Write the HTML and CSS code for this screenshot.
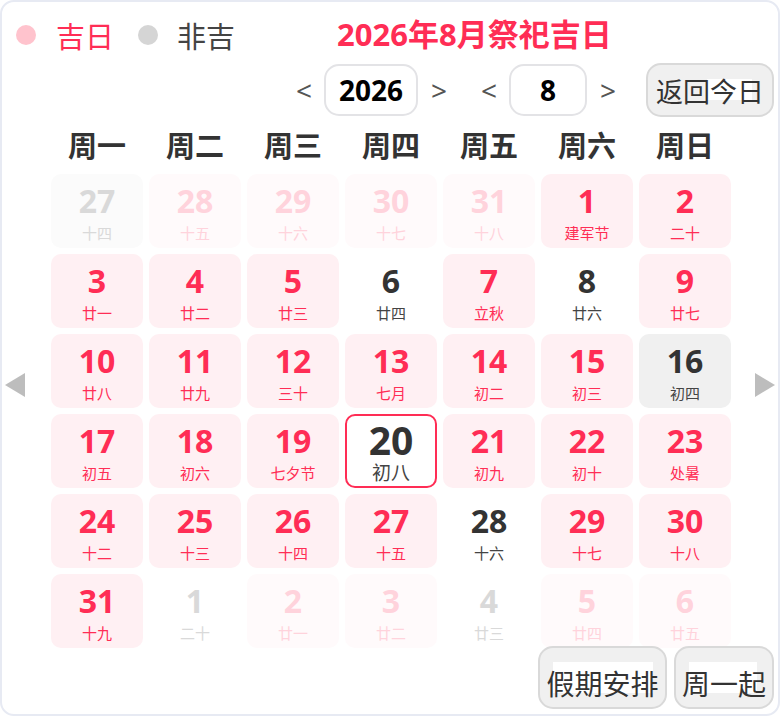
FILE: index.html
```html
<!DOCTYPE html>
<html lang="zh">
<head>
<meta charset="utf-8">
<link rel="stylesheet" href="styles.css">
</head>
<body>
<div class="cal">
  <div class="top">
    <span class="dot dot-ji"></span><span class="leg leg-ji">吉日</span>
    <span class="dot dot-no"></span><span class="leg leg-no">非吉</span>
    <span class="title">2026年8月祭祀吉日</span>
  </div>
  <div class="nav">
    <span class="arr arr-a">&lt;</span>
    <span class="box box-year">2026</span>
    <span class="arr arr-b">&gt;</span>
    <span class="arr arr-c">&lt;</span>
    <span class="box box-month">8</span>
    <span class="arr arr-d">&gt;</span>
    <span class="btn btn-today">返回今日</span>
  </div>
  <div class="main">
    <div class="side side-l"><span class="tri tri-l"></span></div>
    <div class="body">
      <div class="weeks">
        <span>周一</span><span>周二</span><span>周三</span><span>周四</span><span>周五</span><span>周六</span><span>周日</span>
      </div>
      <div class="grid">
        <div class="cell og bgg"><b>27</b><i>十四</i></div>
        <div class="cell op"><b>28</b><i>十五</i></div>
        <div class="cell op"><b>29</b><i>十六</i></div>
        <div class="cell op"><b>30</b><i>十七</i></div>
        <div class="cell op"><b>31</b><i>十八</i></div>
        <div class="cell ji"><b>1</b><i>建军节</i></div>
        <div class="cell ji"><b>2</b><i>二十</i></div>

        <div class="cell ji"><b>3</b><i>廿一</i></div>
        <div class="cell ji"><b>4</b><i>廿二</i></div>
        <div class="cell ji"><b>5</b><i>廿三</i></div>
        <div class="cell no"><b>6</b><i>廿四</i></div>
        <div class="cell ji"><b>7</b><i>立秋</i></div>
        <div class="cell no"><b>8</b><i>廿六</i></div>
        <div class="cell ji"><b>9</b><i>廿七</i></div>

        <div class="cell ji"><b>10</b><i>廿八</i></div>
        <div class="cell ji"><b>11</b><i>廿九</i></div>
        <div class="cell ji"><b>12</b><i>三十</i></div>
        <div class="cell ji"><b>13</b><i>七月</i></div>
        <div class="cell ji"><b>14</b><i>初二</i></div>
        <div class="cell ji"><b>15</b><i>初三</i></div>
        <div class="cell today"><b>16</b><i>初四</i></div>

        <div class="cell ji"><b>17</b><i>初五</i></div>
        <div class="cell ji"><b>18</b><i>初六</i></div>
        <div class="cell ji"><b>19</b><i>七夕节</i></div>
        <div class="cell sel"><b>20</b><i>初八</i></div>
        <div class="cell ji"><b>21</b><i>初九</i></div>
        <div class="cell ji"><b>22</b><i>初十</i></div>
        <div class="cell ji"><b>23</b><i>处暑</i></div>

        <div class="cell ji"><b>24</b><i>十二</i></div>
        <div class="cell ji"><b>25</b><i>十三</i></div>
        <div class="cell ji"><b>26</b><i>十四</i></div>
        <div class="cell ji"><b>27</b><i>十五</i></div>
        <div class="cell no"><b>28</b><i>十六</i></div>
        <div class="cell ji"><b>29</b><i>十七</i></div>
        <div class="cell ji"><b>30</b><i>十八</i></div>

        <div class="cell ji"><b>31</b><i>十九</i></div>
        <div class="cell og"><b>1</b><i>二十</i></div>
        <div class="cell op"><b>2</b><i>廿一</i></div>
        <div class="cell op"><b>3</b><i>廿二</i></div>
        <div class="cell og"><b>4</b><i>廿三</i></div>
        <div class="cell op"><b>5</b><i>廿四</i></div>
        <div class="cell op"><b>6</b><i>廿五</i></div>
      </div>
    </div>
    <div class="side side-r"><span class="tri tri-r"></span></div>
  </div>
  <div class="foot">
    <span class="btn btn-hol">假期安排</span>
    <span class="btn btn-mon">周一起</span>
  </div>
</div>
</body>
</html>
```

FILE: styles.css
```css
html, body {
  margin: 0;
  padding: 0;
  background: #ffffff;
}
body {
  font-family: "Noto Sans", "Noto Sans CJK SC", sans-serif;
  color: #333;
}
.cal {
  width: 780px;
  height: 716px;
  box-sizing: border-box;
  border: 2px solid #e7eaf3;
  border-radius: 14px;
  overflow: hidden;
}
.top {
  display: flex;
  align-items: center;
  height: 46px;
  margin-top: 9px;
}
.dot {
  display: inline-block;
  width: 20px;
  height: 20px;
  border-radius: 50%;
  margin-top: 2px;
}
.dot-ji { background: #ffc3cd; margin-left: 14px; }
.dot-no { background: #d5d5d5; margin-left: 24px; }
.leg {
  font-family: "Noto Sans CJK SC", sans-serif;
  font-size: 29px;
  line-height: 46px;
  margin-top: 2px;
}
.leg-ji { color: #ff2d55; margin-left: 20px; }
.leg-no { color: #444; margin-left: 19px; }
.title {
  margin-left: 102px;
  font-family: "Noto Sans", "Noto Sans CJK SC", sans-serif;
  font-weight: 700;
  font-size: 31px;
  color: #ff2d55;
  line-height: 46px;
}
.nav {
  display: flex;
  align-items: center;
  justify-content: flex-end;
  height: 54px;
  margin-top: 6px;
  padding-right: 4px;
}
.arr {
  width: 28px;
  text-align: center;
  font-size: 28px;
  color: #555;
  line-height: 54px;
}
.arr-a { margin-right: 6px; }
.arr-b { margin: 0 22px 0 7px; }
.arr-c { margin-right: 6px; }
.arr-d { margin: 0 24px 0 7px; }
.box {
  box-sizing: border-box;
  height: 52px;
  border: 2px solid #e3e3e6;
  border-radius: 15px;
  display: flex;
  align-items: center;
  justify-content: center;
  font-weight: 700;
  font-size: 28px;
  color: #000;
}
.box-year { width: 94px; }
.box-month { width: 78px; }
.btn {
  box-sizing: border-box;
  display: flex;
  align-items: center;
  justify-content: center;
  border: 2px solid #d9d9d9;
  border-radius: 15px;
  background-color: #f0f0f0;
  background-repeat: no-repeat;
  font-family: "Noto Sans CJK SC", sans-serif;
  font-size: 28px;
  color: #333;
}
.btn-today {
  width: 128px;
  height: 54px;
  font-size: 27px;
  background-image: linear-gradient(#fff, #fff);
  background-position: 59px 14px;
  background-size: 45px 21px;
}
.main {
  display: flex;
  margin-top: 8px;
}
.side { flex: none; }
.side-l { width: 49px; }
.side-r { width: 47px; }
.tri {
  display: block;
  width: 0;
  height: 0;
  margin-top: 248px;
  border-top: 12px solid transparent;
  border-bottom: 12px solid transparent;
}
.tri-l { border-right: 20px solid #bdbdbd; margin-left: 3px; }
.tri-r { border-left: 20px solid #bdbdbd; margin-left: 24px; }
.body { width: 680px; }
.weeks {
  display: grid;
  grid-template-columns: repeat(7, 92px);
  column-gap: 6px;
  height: 44px;
}
.weeks span {
  text-align: center;
  font-family: "Noto Sans CJK SC", sans-serif;
  font-weight: 700;
  font-size: 29px;
  line-height: 38px;
  color: #333;
}
.grid {
  display: grid;
  grid-template-columns: repeat(7, 92px);
  grid-auto-rows: 74px;
  gap: 6px;
  margin-top: 5px;
}
.cell {
  box-sizing: border-box;
  border-radius: 10px;
  display: flex;
  flex-direction: column;
  align-items: center;
}
.cell b {
  font-weight: 700;
  font-size: 32px;
  line-height: 38px;
  margin-top: 8px;
}
.cell i {
  font-style: normal;
  font-family: "Noto Sans CJK SC", sans-serif;
  font-size: 15px;
  line-height: 20px;
  margin-top: 3px;
}
.ji { background: #fff0f3; color: #ff2d55; }
.no { color: #333; }
.no i { color: #444; }
.today { background: #f0f0f0; color: #333; }
.today i { color: #444; }
.og { color: #d9d9d9; }
.bgg { background: #fbfbfb; }
.op { background: #fffafb; color: #ffd3dc; }
.sel {
  border: 2px solid #ff2d55;
  background: #fff;
  color: #333;
}
.sel b {
  font-size: 39px;
  line-height: 38px;
  margin-top: 5px;
}
.sel i {
  font-size: 19px;
  line-height: 20px;
  margin-top: 3px;
  color: #444;
}
.foot {
  display: flex;
  justify-content: flex-end;
  gap: 7px;
  padding-right: 4px;
  margin-top: -2px;
}
.btn-hol, .btn-mon {
  height: 63px;
  padding-top: 10px;
  background-image: linear-gradient(#fff, #fff);
  background-position: 13px 14px;
  background-size: 100px 31px;
}
.btn-hol { width: 129px; }
.btn-mon { width: 100px; background-size: 68px 31px; }
```
